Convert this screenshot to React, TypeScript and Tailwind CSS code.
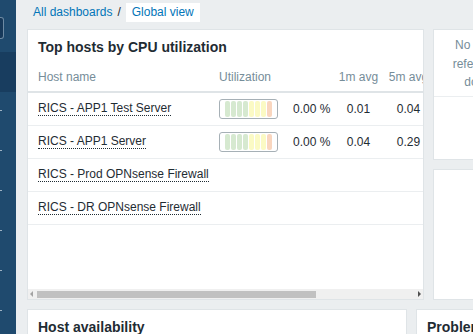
const hosts = [
  { name: "RICS - APP1 Test Server", util: "0.00 %", m1: "0.01", m5: "0.04", bar: true },
  { name: "RICS - APP1 Server", util: "0.00 %", m1: "0.04", m5: "0.29", bar: true },
  { name: "RICS - Prod OPNsense Firewall" },
  { name: "RICS - DR OPNsense Firewall" },
];

const cells = ["#d6e9d0", "#d6e9d0", "#d6e9d0", "#d6e9d0", "#fbfac4", "#fbfac4", "#fbfac4", "#f9d6bf"];

const UtilBar = () => (
  <div className="flex h-[20px] w-[59px] items-center gap-[1px] rounded-[3px] border border-[#a6b0b6] px-[5px]">
    {cells.map((c, i) => (
      <span key={i} className="h-[16px] w-[5.75px] rounded-[2px]" style={{ backgroundColor: c }} />
    ))}
  </div>
);

const Sidebar = () => (
  <aside className="flex h-full w-[16px] shrink-0 flex-col bg-[#1f4a6e]">
    <div className="mt-[17px] h-[22px] w-[4px] shrink-0 rounded-r-[3px] border border-l-0 border-[#6d8aa3] bg-[#17395a]" />
    <div className="mt-[13px] h-[40px] w-full shrink-0 bg-[#183d5f]" />
    <div className="flex flex-col gap-[39px] pt-[18px]">
      {[0, 1, 2, 3, 4, 5].map((i) => (
        <span key={i} className="h-[1px] w-[2px] bg-[#9fb3c4]" />
      ))}
    </div>
  </aside>
);

export default function App() {
  return (
    <div className="flex h-[334px] w-[473px] overflow-hidden bg-[#ebeef0] font-['Liberation_Sans',Arial,sans-serif] text-[12px] text-[#1f2c33]">
      <Sidebar />
      <main className="flex min-w-0 flex-1 flex-col pl-[11px]">
        <nav className="flex h-[29px] shrink-0 items-start pl-[6px] pt-[3px] text-[#0275b8]">
          <span className="leading-[19px]">All dashboards</span>
          <span className="mx-[5px] leading-[19px] text-[#1f2c33]">/</span>
          <span className="bg-white px-[6px] leading-[19px]">Global view</span>
        </nav>

        <div className="flex shrink-0 gap-[9px]">
          <section className="flex h-[271px] w-[397px] shrink-0 flex-col overflow-hidden border border-[#dfe4e7] bg-white">
            <h2 className="h-[32px] shrink-0 pl-[10px] pt-[9px] text-[14px] leading-[16px] font-bold">
              Top hosts by CPU utilization
            </h2>
            <div className="flex-1 overflow-hidden">
              <div className="w-[440px]">
                <div className="grid h-[31px] grid-cols-[181px_74px_42px_47px_53px] items-center whitespace-nowrap border-b-2 border-[#dfe4e7] pl-[10px] text-[#768d99]">
                  <span>Host name</span>
                  <span>Utilization</span>
                  <span />
                  <span className="text-center">1m avg</span>
                  <span className="text-center">5m avg</span>
                </div>
                {hosts.map((h) => (
                  <div
                    key={h.name}
                    className="grid h-[33px] grid-cols-[181px_74px_42px_47px_53px] items-center whitespace-nowrap border-b border-[#ebeef0] pl-[10px]"
                  >
                    <span className="w-fit border-b border-dotted border-[#1f2c33] leading-[13px]">{h.name}</span>
                    <span>{h.bar && <UtilBar />}</span>
                    <span>{h.util}</span>
                    <span className="text-center">{h.m1}</span>
                    <span className="text-center">{h.m5}</span>
                  </div>
                ))}
              </div>
            </div>
            <div className="flex h-[10px] shrink-0 items-center bg-[#f0f0f0] px-[2px]">
              <span className="h-0 w-0 border-y-[3px] border-r-[3px] border-y-transparent border-r-[#a3a3a3]" />
              <span className="ml-[4px] h-[7px] w-[279px] bg-[#c1c1c1]" />
              <span className="ml-auto h-0 w-0 border-y-[3px] border-l-[3px] border-y-transparent border-l-[#505050]" />
            </div>
          </section>

          <div className="flex w-[140px] shrink-0 flex-col gap-[9px]">
            <section className="flex h-[131px] flex-col border border-[#dfe4e7] bg-white">
              <p className="h-[67px] border-b border-[#ebeef0] pt-[6px] text-center leading-[18.5px] text-[#768d99]">
                No permissions to
                <br />
                referred object or it
                <br />
                does not exist!
              </p>
            </section>
            <section className="h-[131px] border border-[#dfe4e7] bg-white" />
          </div>
        </div>

        <div className="mt-[9px] flex shrink-0 gap-[9px]">
          <section className="h-[40px] w-[380px] shrink-0 border border-[#dfe4e7] bg-white pl-[10px] pt-[9px]">
            <h2 className="text-[14px] leading-[16px] font-bold">Host availability</h2>
          </section>
          <section className="h-[40px] w-[120px] shrink-0 border border-[#dfe4e7] bg-white pl-[10px] pt-[9px]">
            <h2 className="whitespace-nowrap text-[14px] leading-[16px] font-bold">Problems by severity</h2>
          </section>
        </div>
      </main>
    </div>
  );
}
